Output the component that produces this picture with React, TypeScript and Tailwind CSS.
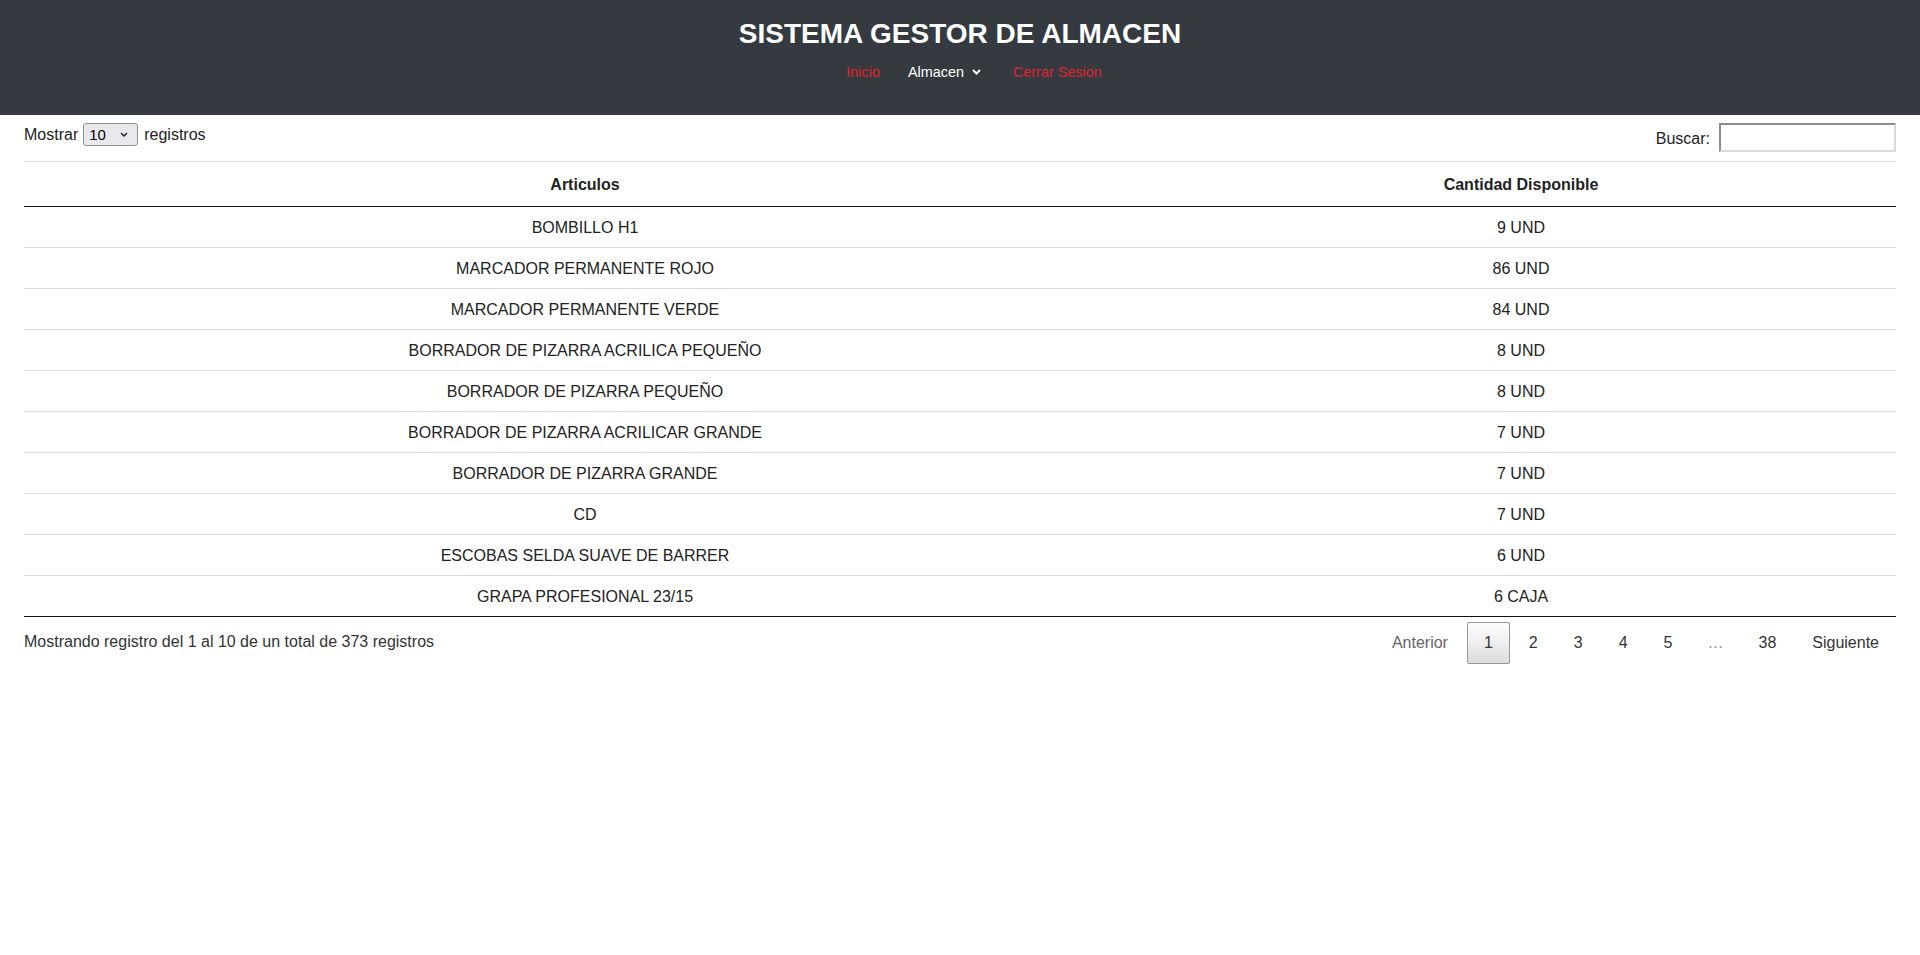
import React from "react";

const rows: [string, string][] = [
  ["BOMBILLO H1", "9 UND"],
  ["MARCADOR PERMANENTE ROJO", "86 UND"],
  ["MARCADOR PERMANENTE VERDE", "84 UND"],
  ["BORRADOR DE PIZARRA ACRILICA PEQUEÑO", "8 UND"],
  ["BORRADOR DE PIZARRA PEQUEÑO", "8 UND"],
  ["BORRADOR DE PIZARRA ACRILICAR GRANDE", "7 UND"],
  ["BORRADOR DE PIZARRA GRANDE", "7 UND"],
  ["CD", "7 UND"],
  ["ESCOBAS SELDA SUAVE DE BARRER", "6 UND"],
  ["GRAPA PROFESIONAL 23/15", "6 CAJA"],
];

export default function App() {
  return (
    <div className="min-h-[955px] bg-white text-[16px] leading-[24px] text-[#222] font-['Liberation_Sans',Arial,sans-serif]">
      <header className="h-[115px] bg-[#343a40] pt-[18px]">
        <h1 className="text-center text-[28px] leading-[32px] font-bold text-white">
          SISTEMA GESTOR DE ALMACEN
        </h1>
        <nav className="mt-[12px] flex justify-center pl-[28px] text-[14.4px] leading-[20px]">
          <a className="text-[#e0222e]">Inicio</a>
          <a className="ml-[28px] flex items-center text-white">
            Almacen
            <svg className="ml-[8px]" width="9" height="6" viewBox="0 0 9 6">
              <polyline points="1,1 4.5,4.5 8,1" fill="none" stroke="white" strokeWidth="2" />
            </svg>
          </a>
          <a className="ml-[32px] text-[#e0222e]">Cerrar Sesion</a>
        </nav>
      </header>

      <div className="px-6">
        <div className="flex h-[46px] justify-between">
          <div className="flex h-[23px] mt-[8px] items-center">
            <span className="mt-[1px]">Mostrar</span>
            <div className="relative ml-[5px] mr-[6px]">
              <select className="h-[23px] w-[55px] appearance-none rounded-[3px] border border-[#8f8f9d] bg-[#e9e9ed] pl-[5px] text-[15px] leading-[19px] text-black">
                <option>10</option>
                <option>25</option>
                <option>50</option>
                <option>100</option>
              </select>
              <svg className="pointer-events-none absolute left-[37px] top-[9px]" width="8" height="6" viewBox="0 0 8 6">
                <polyline points="1,1 4,4 7,1" fill="none" stroke="#222" strokeWidth="1.5" />
              </svg>
            </div>
            <span className="mt-[1px]">registros</span>
          </div>
          <div className="flex items-center h-[29px] mt-[8px]">
            <span className="mt-[3px]">Buscar:</span>
            <input
              type="text"
              className="ml-[9px] h-[29px] w-[177px] border-2 border-t-[#8c8c8c] border-l-[#8c8c8c] border-b-[#d9d9d9] border-r-[#d9d9d9] bg-white outline-none"
            />
          </div>
        </div>

        <table className="w-full border-collapse border-t border-[#e0e0e0] text-center text-[#222]">
          <thead>
            <tr>
              <th className="h-[45px] w-[1122px] border-b border-[#111] pt-[1px] font-bold text-[#222]">Articulos</th>
              <th className="h-[45px] border-b border-[#111] pt-[1px] font-bold text-[#222]">Cantidad Disponible</th>
            </tr>
          </thead>
          <tbody>
            {rows.map(([a, b], i) => (
              <tr key={i} className={i === rows.length - 1 ? "border-b border-[#111]" : "border-b border-[#dddddd]"}>
                <td className="h-[41px] pt-[2px] pb-0">{a}</td>
                <td className="h-[41px] pt-[2px] pb-0">{b}</td>
              </tr>
            ))}
          </tbody>
        </table>

        <div className="flex justify-between">
          <div className="pt-[13px] text-[#333]">Mostrando registro del 1 al 10 de un total de 373 registros</div>
          <div className="flex gap-[2px] pt-[5px] text-[#333]">
            <span className="border border-transparent px-4 py-2 text-[#666]">Anterior</span>
            <span className="rounded-[2px] border border-[#979797] bg-gradient-to-b from-white to-[#dcdcdc] px-4 py-2">1</span>
            <span className="border border-transparent px-4 py-2">2</span>
            <span className="border border-transparent px-4 py-2">3</span>
            <span className="border border-transparent px-4 py-2">4</span>
            <span className="border border-transparent px-4 py-2">5</span>
            <span className="px-4 py-[9px] text-[#888]">…</span>
            <span className="border border-transparent px-4 py-2">38</span>
            <span className="border border-transparent px-4 py-2">Siguiente</span>
          </div>
        </div>
      </div>
    </div>
  );
}
